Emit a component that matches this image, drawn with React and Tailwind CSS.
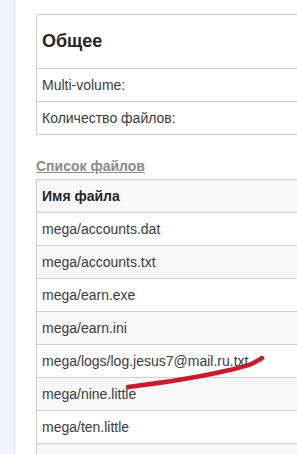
import React from 'react';

const files = [
  'mega/accounts.dat',
  'mega/accounts.txt',
  'mega/earn.exe',
  'mega/earn.ini',
  'mega/logs/log.jesus7@mail.ru.txt',
  'mega/nine.little',
  'mega/ten.little',
  '',
];

const App = () => {
  return (
    <div className="relative flex w-[297px] h-[454px] overflow-hidden bg-white font-['Liberation_Sans',Arial,sans-serif] text-[14px]">
      <div className="w-[15px] shrink-0 bg-[#f2f4f9] border-r border-[#dcdfe4]" />

      <div className="flex-1 pl-[21px] pt-[14px]">
        <div className="w-[400px] border-t border-l border-[#cdd1cd]">
          <div className="h-[54px] flex items-center px-[5px] border-b border-[#cdd1cd]">
            <h2 className="text-[18px] font-bold text-[#1f2629]">Общее</h2>
          </div>
          <div className="h-[33px] flex items-center px-[5px] border-b border-[#cdd1cd] text-[#3b3b3b]">
            Multi-volume:
          </div>
          <div className="h-[33px] flex items-center px-[5px] border-b border-[#cdd1cd] text-[#3b3b3b]">
            Количество файлов:
          </div>
        </div>

        <div className="mt-[21px] mb-[3px] h-[20px] leading-[20px]">
          <a href="#" className="font-bold text-[#8a8a8a] underline">
            Список файлов
          </a>
        </div>

        <div className="w-[400px] border-t border-l border-[#cdd1cd]">
          <div className="h-[33px] flex items-center px-[5px] border-b border-[#cdd1cd] bg-[#f8f8f8] font-bold text-[#1f2629]">
            Имя файла
          </div>
          {files.map((f, i) => (
            <div
              key={i}
              className={`h-[33px] flex items-center px-[5px] border-b border-[#cdd1cd] text-[#3b3b3b] ${i % 2 === 1 ? 'bg-[#f8f8f8]' : 'bg-white'}`}
            >
              {f}
            </div>
          ))}
        </div>
      </div>

      {/* red marker scribble over the log row */}
      <svg className="absolute left-0 top-0 pointer-events-none" width="297" height="454">
        <path
          d="M128 387 C 160 383, 195 378, 225 371 S 252 364, 262 358"
          fill="none"
          stroke="#cc1a2c"
          strokeWidth="4.5"
          strokeLinecap="round"
        />
      </svg>
    </div>
  );
};

export default App;
